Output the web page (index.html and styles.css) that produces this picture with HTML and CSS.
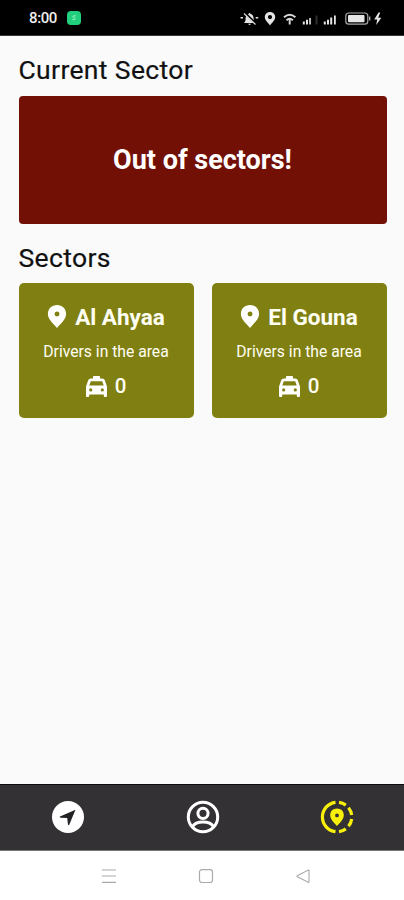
FILE: index.html
```
<!DOCTYPE html>
<html lang="en">
<head>
<meta charset="utf-8">
<title>Sectors</title>
<link rel="stylesheet" href="styles.css">
</head>
<body>
<svg class="defs" width="0" height="0" aria-hidden="true">
  <symbol id="pin" viewBox="0 0 20 24"><path fill-rule="evenodd" d="M10 0C4.500 0 .5 4 .5 9.300 .5 14.800 6 19 10 24 14 19 19.500 14.800 19.500 9.300 19.500 4 15.500 0 10 0Zm0 6.900a2.600 2.600 0 1 1 0 5.200 2.600 2.600 0 0 1 0-5.200Z"/></symbol>
  <symbol id="taxi" viewBox="0 0 21 21"><path fill-rule="evenodd" d="M7 2.500V.8Q7 0 7.800 0h5.400Q14 0 14 .8v1.700h2.200q1.900 0 2.500 1.600l2 5.600q.3.700.3 1.500v8.600Q21 21 19.900 21h-1Q17.800 21 17.800 19.900V18.500H3.200v1.400Q3.200 21 2.100 21h-1Q0 21 0 19.900v-8.700q0-.8.3-1.500l2-5.600Q2.900 2.500 4.800 2.500ZM4.800 5.200 3.300 9.500h14.400l-1.500-4.300ZM4.700 12.300a1.600 1.600 0 1 0 0 3.200 1.600 1.600 0 0 0 0-3.200Zm11.600 0a1.600 1.600 0 1 0 0 3.200 1.600 1.600 0 0 0 0-3.200Z"/></symbol>
</svg>
<header class="status">
  <div class="status-left">
    <span class="clock">8:00</span>
    <span class="app-badge"><svg width="8" height="8" viewBox="0 0 8 8"><path d="M5.800 2C3 1 2 3 4 3.700S6 6.200 2.300 5.500" fill="none" stroke="#a5f3c8" stroke-width="1"/></svg></span>
  </div>
  <svg class="status-icons" width="146" height="18" viewBox="240 9 146 18">
    <g fill="#e4e4e4">
      <path d="M243.800 23c1.800-1.500 1.800-3 1.800-4.500 0-2.500 1.200-4 3-4.500.2-1.500 1.800-1.500 2 0 2 .5 3 2.200 3 4.500 0 1.500.2 3 2 4.500Zm4.400.8h2.800c-.3 1.500-2.500 1.500-2.800 0Z"/>
      <path d="M240.500 17h2.500v1.600h-2.500zM255.700 17h2.500v1.600h-2.500z"/>
      <path fill-rule="evenodd" d="M270 12c-3 0-5.200 2.200-5.200 5 0 3.300 3 5.300 5.200 8.400 2.200-3.100 5.200-5.100 5.200-8.400 0-2.800-2.200-5-5.200-5Zm0 3a2.100 2.100 0 1 1 0 4.200 2.100 2.100 0 0 1 0-4.200Z"/>
      <path d="M302.800 21.500h2v3h-2zM306 19.800h2v4.700h-2zM309.200 18h1.600v6.500h-1.600z"/>
      <path d="M323.800 21.500h2v3h-2zM327 19.800h2v4.700h-2zM330.200 17.500h2v7h-2zM334 15.500h1.800v9H334z"/>
      <path d="M378.500 12.500l-4.300 7h3l-1 5.500 5.200-7.300h-3.200l2-5.200z"/>
    </g>
    <path d="M315.500 15.500h2v9h-2z" fill="#303030"/>
    <path d="M245 13l11 11" stroke="#000" stroke-width="2.400"/>
    <path d="M244 13.500l11.500 11" stroke="#ddd" stroke-width="1.200"/>
    <g fill="none" stroke="#d5d5d5" stroke-width="2"><path d="M284 17.300q5.700-5 11.400 0M286.500 20.200q3.200-2.800 6.400 0"/><path d="M289.700 19v5.500"/></g>
    <rect x="345.800" y="13" width="22" height="11.200" rx="3" fill="none" stroke="#a8a8a8" stroke-width="1.200"/>
    <rect x="348" y="15" width="16.500" height="7.200" rx="1" fill="#e6e6e6"/>
    <path d="M369.700 16.500v4" stroke="#aaa" stroke-width="1.400"/>
  </svg>
</header>
<main>
  <h1>Current Sector</h1>
  <section class="current">Out of sectors!</section>
  <h1 class="second">Sectors</h1>
  <section class="grid">
    <article class="card">
      <h2><svg class="pin"><use href="#pin"/></svg><span>Al Ahyaa</span></h2>
      <p>Drivers in the area</p>
      <div class="count"><svg class="taxi"><use href="#taxi"/></svg><span>0</span></div>
    </article>
    <article class="card">
      <h2><svg class="pin"><use href="#pin"/></svg><span>El Gouna</span></h2>
      <p>Drivers in the area</p>
      <div class="count"><svg class="taxi"><use href="#taxi"/></svg><span>0</span></div>
    </article>
  </section>
</main>
<nav class="tabs">
  <svg width="34" height="34" viewBox="-17 -17 34 34"><circle r="16" fill="#fff"/><path d="M7.500-7.200L-8.500-.3-7.500 .8-.8 1 0 7.800 1 8.200Z" fill="#222124"/></svg>
  <svg width="34" height="34" viewBox="-17 -17 34 34" fill="none" stroke="#fff" stroke-width="3"><circle r="14.700"/><circle cy="-3.700" r="5.100"/><path d="M-10.500 9.800C-7 3.500 7 3.500 10.500 9.800"/></svg>
  <svg width="34" height="34" viewBox="-17 -17 34 34"><g fill="none" stroke="#f8f00b" stroke-width="3.200"><path d="M-1.500-14.700A14.800 14.800 0 0 0-1.500 14.700"/><path d="M2-14.700A14.800 14.800 0 0 1 8.800-11.900M11.500-9.300A14.800 14.800 0 0 1 14.700-2M14.700 2A14.800 14.800 0 0 1 11.500 9.300M8.800 11.900A14.800 14.800 0 0 1 2 14.700"/></g><path fill="#f8f00b" fill-rule="evenodd" d="M0-8.500C-4-8.500-6.800-5.700-6.800-2-6.800 2.500-3 5.500 0 9 3 5.500 6.800 2.500 6.800-2 6.800-5.700 4-8.500 0-8.500ZM0-3.500a1.900 1.900 0 1 1 0 3.800 1.900 1.900 0 0 1 0-3.800Z"/></svg>
</nav>
<footer class="system">
  <svg width="16" height="16" viewBox="0 0 16 16"><path d="M1 2h14M1 8h14M1 14.300h14" stroke="#aaa" stroke-width="1.200"/></svg>
  <svg width="16" height="16" viewBox="0 0 16 16"><rect x="1.500" y="1.700" width="13" height="12.800" rx="2.500" fill="none" stroke="#aaa" stroke-width="1.200"/></svg>
  <svg width="16" height="16" viewBox="0 0 16 16"><path d="M14 2.300v11.800q0 .5-.7.200L2.300 8.700q-.8-.5 0-1L13.300 2q.7-.2.700.3Z" fill="none" stroke="#aaa" stroke-width="1.100"/></svg>
</footer>
</body>
</html>
```
FILE: styles.css
```
* { box-sizing: border-box; }
body {
  margin: 0;
  height: 900px;
  display: flex;
  flex-direction: column;
  overflow: hidden;
  background: #fafafa;
  font-family: Roboto, sans-serif;
}
svg { display: block; flex: none; }
.defs { position: absolute; }
.status {
  height: 36px;
  flex: none;
  display: flex;
  align-items: center;
  justify-content: space-between;
  padding: 0 18px 0 29px;
  background: #000;
  border-bottom: 1px solid #383838;
}
.status-left { display: flex; align-items: center; gap: 10px; padding-top: 1px; }
.clock { color: #eee; font-size: 15px; font-weight: 500; letter-spacing: -0.4px; }
.app-badge {
  display: grid;
  place-items: center;
  width: 14px;
  height: 14px;
  border-radius: 4px;
  background: #22cf7d;
}
main { flex: 1; padding: 17px 17.500px 0 18.500px; }
h1 {
  margin: 0;
  height: 42.500px;
  line-height: 34px;
  font-size: 26.500px;
  font-weight: 400;
  color: #111;
  letter-spacing: 0.350px;
  white-space: nowrap;
  -webkit-text-stroke: 0.2px #111;
}
h1.second { height: 42px; margin-top: 17px; }
.current {
  height: 128.500px;
  border-radius: 4px;
  background: #731006;
  color: #fff;
  display: flex;
  align-items: center;
  justify-content: center;
  font-size: 27px;
  font-weight: 700;
}
.grid { display: grid; grid-template-columns: 1fr 1fr; gap: 18px; }
.card {
  height: 134.500px;
  border-radius: 5px;
  background: #808012;
  color: #fffef2;
  display: flex;
  flex-direction: column;
  align-items: center;
  padding-top: 20px;
}
h2 {
  margin: 0;
  height: 28px;
  display: flex;
  align-items: center;
  gap: 8px;
  font-size: 22.500px;
  font-weight: 700;
  white-space: nowrap;
}
.pin { width: 20px; height: 23px; fill: #fff; margin-top: -2px; }
.card p { margin: 11px 0 0; line-height: 20px; font-size: 15.700px; white-space: nowrap; }
.count {
  margin-top: 11px;
  height: 26px;
  display: flex;
  align-items: center;
  gap: 8px;
  font-size: 20.500px;
  font-weight: 500;
}
.taxi { width: 21px; height: 21px; fill: #fff; }
.tabs {
  height: 67px;
  flex: none;
  display: grid;
  grid-template-columns: repeat(3, 134.500px);
  place-items: center;
  justify-content: center;
  padding: 0 0 1.500px 1px;
  background: #333134;
  border-top: 1px solid #0c0c0c;
  border-bottom: 1px solid #777;
}
.system {
  height: 49px;
  flex: none;
  display: flex;
  justify-content: center;
  align-items: center;
  gap: 81px;
  background: #fff;
  padding-left: 7px;
}
```
